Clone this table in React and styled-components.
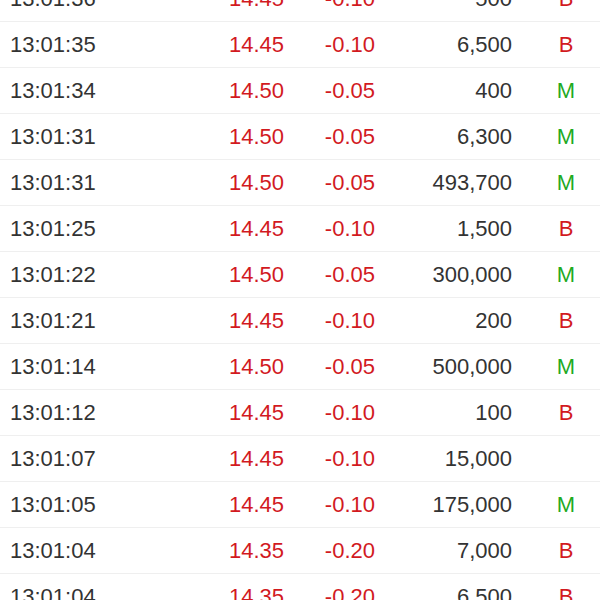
import React from 'react'
import styled, { createGlobalStyle } from 'styled-components'

const GlobalStyle = createGlobalStyle`
  html, body {
    margin: 0;
    padding: 0;
    background: #ffffff;
  }
  body {
    font-family: "Liberation Sans", Arial, "Noto Sans", sans-serif;
    overflow: hidden;
  }
`

const Screen = styled.div`
  width: 600px;
  height: 600px;
  overflow: hidden;
  background: #ffffff;
`

const List = styled.div`
  margin-top: -24px;
`

const Row = styled.div`
  display: grid;
  grid-template-columns: 184px 90px 91px 137px 1fr;
  align-items: center;
  height: 45px;
  padding-left: 10px;
  border-bottom: 1px solid #efefef;
  font-size: 22px;
  color: #333333;
`

const Cell = styled.div`
  text-align: ${p => p.$align || 'left'};
  color: ${p => p.$color || 'inherit'};
  white-space: nowrap;
`

const Flag = styled.div`
  padding-left: 31px;
  width: 46px;
  text-align: center;
  color: ${p => (p.$type === 'M' ? '#1faa1f' : '#d21a1f')};
`

const RED = '#d21a1f'

const trades = [
  ['13:01:36', '14.45', '-0.10', '500', 'B'],
  ['13:01:35', '14.45', '-0.10', '6,500', 'B'],
  ['13:01:34', '14.50', '-0.05', '400', 'M'],
  ['13:01:31', '14.50', '-0.05', '6,300', 'M'],
  ['13:01:31', '14.50', '-0.05', '493,700', 'M'],
  ['13:01:25', '14.45', '-0.10', '1,500', 'B'],
  ['13:01:22', '14.50', '-0.05', '300,000', 'M'],
  ['13:01:21', '14.45', '-0.10', '200', 'B'],
  ['13:01:14', '14.50', '-0.05', '500,000', 'M'],
  ['13:01:12', '14.45', '-0.10', '100', 'B'],
  ['13:01:07', '14.45', '-0.10', '15,000', ''],
  ['13:01:05', '14.45', '-0.10', '175,000', 'M'],
  ['13:01:04', '14.35', '-0.20', '7,000', 'B'],
  ['13:01:04', '14.35', '-0.20', '6,500', 'B'],
]

const App = () => (
  <Screen>
    <GlobalStyle />
    <List>
      {trades.map(([time, price, change, vol, type], i) => (
        <Row key={i}>
          <Cell>{time}</Cell>
          <Cell $align="right" $color={RED}>{price}</Cell>
          <Cell $align="right" $color={RED}>{change}</Cell>
          <Cell $align="right">{vol}</Cell>
          <Flag $type={type}>{type}</Flag>
        </Row>
      ))}
    </List>
  </Screen>
)

export default App
